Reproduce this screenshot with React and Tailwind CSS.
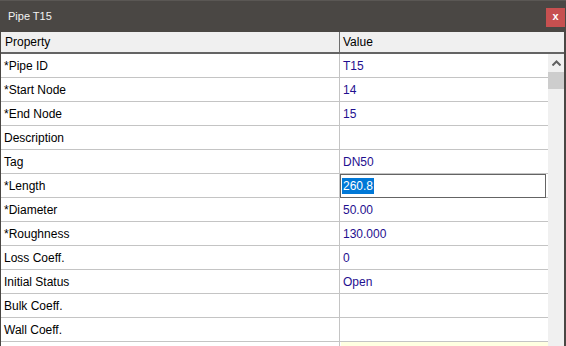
import React from "react";

const rows = [
  ["*Pipe ID", "T15"],
  ["*Start Node", "14"],
  ["*End Node", "15"],
  ["Description", ""],
  ["Tag", "DN50"],
  ["*Length", "260.8", "edit"],
  ["*Diameter", "50.00"],
  ["*Roughness", "130.000"],
  ["Loss Coeff.", "0"],
  ["Initial Status", "Open"],
  ["Bulk Coeff.", ""],
  ["Wall Coeff.", ""],
  ["", "", "tip"],
];

export default function App() {
  return (
    <div
      className="w-[566px] h-[346px] overflow-hidden flex flex-col bg-[#4a4744]"
      style={{ fontFamily: '"Liberation Sans", Arial, sans-serif' }}
    >
      <div className="h-[32px] shrink-0 flex items-start border-t border-[#5a5754]">
        <div className="pl-[8px] pt-[8px] text-[11px] leading-[14px] text-[#f2f2f2]">Pipe T15</div>
        <div className="ml-auto mt-[7px] mr-[1px] w-[19px] h-[19px] bg-[#c75050] flex items-center justify-center text-white text-[11px] font-bold leading-none pb-[2px]">
          x
        </div>
      </div>
      <div className="flex-1 ml-[1px] mr-[2px] flex flex-col bg-white min-h-0">
        <div className="h-[22px] shrink-0 flex bg-[#f0f0f0] border-b-2 border-[#646464] text-[12px] text-black">
          <div className="w-[339px] shrink-0 border-r border-[#6e6e6e] pl-[4px] flex items-center">Property</div>
          <div className="flex-1 pl-[3px] flex items-center">Value</div>
        </div>
        <div className="flex-1 flex min-h-0">
          <div className="w-[547px] shrink-0 flex flex-col">
            {rows.map(([k, v, kind], i) => (
              <div key={i} className="h-[24px] shrink-0 flex border-b border-[#c4c4c4] text-[12px]">
                <div className="w-[339px] shrink-0 border-r border-[#c4c4c4] pl-[3px] flex items-center text-black">
                  {k}
                </div>
                {kind === "edit" ? (
                  <div className="flex-1 flex items-center">
                    <div className="w-[206px] h-[24px] border border-[#646464] flex items-center pl-[1px] -mb-px">
                      <span className="bg-[#0078d7] text-white px-[1px] leading-[16px]">{v}</span>
                    </div>
                  </div>
                ) : (
                  <div
                    className={
                      "flex-1 pl-[3px] flex items-center text-[#1f0f8f] " +
                      (kind === "tip" ? "bg-[#ffffe1] ml-[1px]" : "")
                    }
                  >
                    {v}
                  </div>
                )}
              </div>
            ))}
          </div>
          <div className="flex-1 bg-[#f0f0f0] flex flex-col items-stretch">
            <div className="h-[18px] flex items-center justify-center">
              <svg width="9" height="6" viewBox="0 0 9 6">
                <path d="M0.5 5.5 L4.5 1.5 L8.5 5.5" fill="none" stroke="#606060" strokeWidth="2" />
              </svg>
            </div>
            <div className="h-[17px] bg-[#cdcdcd]" />
          </div>
        </div>
      </div>
    </div>
  );
}
